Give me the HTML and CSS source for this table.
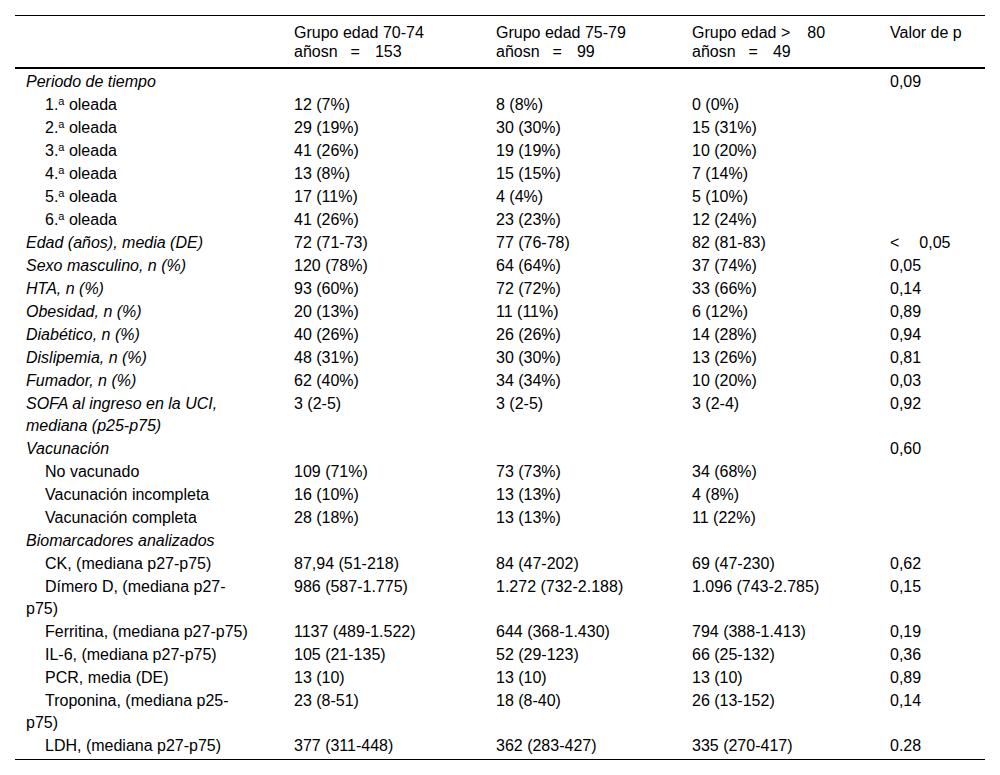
FILE: index.html
```html
<!DOCTYPE html>
<html lang="es">
<head>
<meta charset="utf-8">
<title>Tabla</title>
<link rel="stylesheet" href="styles.css">
</head>
<body>
<table class="data">
  <colgroup>
    <col class="c1"><col class="c2"><col class="c3"><col class="c4"><col class="c5">
  </colgroup>
  <thead>
    <tr>
      <th></th>
      <th>Grupo edad 70-74<br>añosn<span class="eq">=</span>153</th>
      <th>Grupo edad 75-79<br>añosn<span class="eq">=</span>99</th>
      <th>Grupo edad &gt;<span class="gap"></span>80<br>añosn<span class="eq">=</span>49</th>
      <th>Valor de p</th>
    </tr>
  </thead>
  <tbody>
    <tr class="first"><td class="cat">Periodo de tiempo</td><td></td><td></td><td></td><td>0,09</td></tr>
    <tr><td class="sub">1.<sup>a</sup> oleada</td><td>12 (7%)</td><td>8 (8%)</td><td>0 (0%)</td><td></td></tr>
    <tr><td class="sub">2.<sup>a</sup> oleada</td><td>29 (19%)</td><td>30 (30%)</td><td>15 (31%)</td><td></td></tr>
    <tr><td class="sub">3.<sup>a</sup> oleada</td><td>41 (26%)</td><td>19 (19%)</td><td>10 (20%)</td><td></td></tr>
    <tr><td class="sub">4.<sup>a</sup> oleada</td><td>13 (8%)</td><td>15 (15%)</td><td>7 (14%)</td><td></td></tr>
    <tr><td class="sub">5.<sup>a</sup> oleada</td><td>17 (11%)</td><td>4 (4%)</td><td>5 (10%)</td><td></td></tr>
    <tr><td class="sub">6.<sup>a</sup> oleada</td><td>41 (26%)</td><td>23 (23%)</td><td>12 (24%)</td><td></td></tr>
    <tr><td class="cat">Edad (años), media (DE)</td><td>72 (71-73)</td><td>77 (76-78)</td><td>82 (81-83)</td><td>&lt;<span class="gap2"></span>0,05</td></tr>
    <tr><td class="cat">Sexo masculino, n (%)</td><td>120 (78%)</td><td>64 (64%)</td><td>37 (74%)</td><td>0,05</td></tr>
    <tr><td class="cat">HTA, n (%)</td><td>93 (60%)</td><td>72 (72%)</td><td>33 (66%)</td><td>0,14</td></tr>
    <tr><td class="cat">Obesidad, n (%)</td><td>20 (13%)</td><td>11 (11%)</td><td>6 (12%)</td><td>0,89</td></tr>
    <tr><td class="cat">Diabético, n (%)</td><td>40 (26%)</td><td>26 (26%)</td><td>14 (28%)</td><td>0,94</td></tr>
    <tr><td class="cat">Dislipemia, n (%)</td><td>48 (31%)</td><td>30 (30%)</td><td>13 (26%)</td><td>0,81</td></tr>
    <tr><td class="cat">Fumador, n (%)</td><td>62 (40%)</td><td>34 (34%)</td><td>10 (20%)</td><td>0,03</td></tr>
    <tr><td class="cat">SOFA al ingreso en la UCI, mediana (p25-p75)</td><td>3 (2-5)</td><td>3 (2-5)</td><td>3 (2-4)</td><td>0,92</td></tr>
    <tr><td class="cat">Vacunación</td><td></td><td></td><td></td><td>0,60</td></tr>
    <tr><td class="sub">No vacunado</td><td>109 (71%)</td><td>73 (73%)</td><td>34 (68%)</td><td></td></tr>
    <tr><td class="sub">Vacunación incompleta</td><td>16 (10%)</td><td>13 (13%)</td><td>4 (8%)</td><td></td></tr>
    <tr><td class="sub">Vacunación completa</td><td>28 (18%)</td><td>13 (13%)</td><td>11 (22%)</td><td></td></tr>
    <tr><td class="cat">Biomarcadores analizados</td><td></td><td></td><td></td><td></td></tr>
    <tr><td class="sub">CK, (mediana p27-p75)</td><td>87,94 (51-218)</td><td>84 (47-202)</td><td>69 (47-230)</td><td>0,62</td></tr>
    <tr><td class="sub">Dímero D, (mediana p27-p75)</td><td>986 (587-1.775)</td><td>1.272 (732-2.188)</td><td>1.096 (743-2.785)</td><td>0,15</td></tr>
    <tr><td class="sub">Ferritina, (mediana p27-p75)</td><td>1137 (489-1.522)</td><td>644 (368-1.430)</td><td>794 (388-1.413)</td><td>0,19</td></tr>
    <tr><td class="sub">IL-6, (mediana p27-p75)</td><td>105 (21-135)</td><td>52 (29-123)</td><td>66 (25-132)</td><td>0,36</td></tr>
    <tr><td class="sub">PCR, media (DE)</td><td>13 (10)</td><td>13 (10)</td><td>13 (10)</td><td>0,89</td></tr>
    <tr><td class="sub">Troponina, (mediana p25-p75)</td><td>23 (8-51)</td><td>18 (8-40)</td><td>26 (13-152)</td><td>0,14</td></tr>
    <tr class="last"><td class="sub">LDH, (mediana p27-p75)</td><td>377 (311-448)</td><td>362 (283-427)</td><td>335 (270-417)</td><td>0.28</td></tr>
  </tbody>
</table>
</body>
</html>
```

FILE: styles.css
```css
html, body {
  margin: 0;
  padding: 0;
  background: #fff;
}

body {
  padding: 15px 15px 0 15px;
  font-family: "Liberation Sans", Arial, sans-serif;
  font-size: 16px;
  color: #000;
}

.data {
  width: 970px;
  border-collapse: collapse;
  table-layout: fixed;
  border-top: 1px solid #000;
  border-bottom: 1px solid #000;
}

.c1 { width: 268px; }
.c2 { width: 202px; }
.c3 { width: 196px; }
.c4 { width: 198px; }
.c5 { width: 106px; }

.data th {
  font-weight: normal;
  text-align: left;
  vertical-align: top;
  line-height: 19px;
  padding: 7px 10px 6px 11px;
  border-bottom: 2px solid #000;
}

.data td {
  text-align: left;
  vertical-align: top;
  line-height: 22px;
  padding: 0.5px 10px 0.5px 11px;
}

.data td:first-child {
  padding-right: 30px;
}

.data tr.first td {
  padding-top: 2px;
}

.data tr.last td {
  padding-bottom: 2px;
}

.cat {
  font-style: italic;
}

.sub {
  text-indent: 19px;
}

sup {
  font-size: 11px;
  line-height: 0;
  vertical-align: 5px;
}

.eq {
  display: inline-block;
  margin: 0 15px 0 13px;
}

.gap {
  display: inline-block;
  width: 17px;
}

.gap2 {
  display: inline-block;
  width: 20px;
}
```
